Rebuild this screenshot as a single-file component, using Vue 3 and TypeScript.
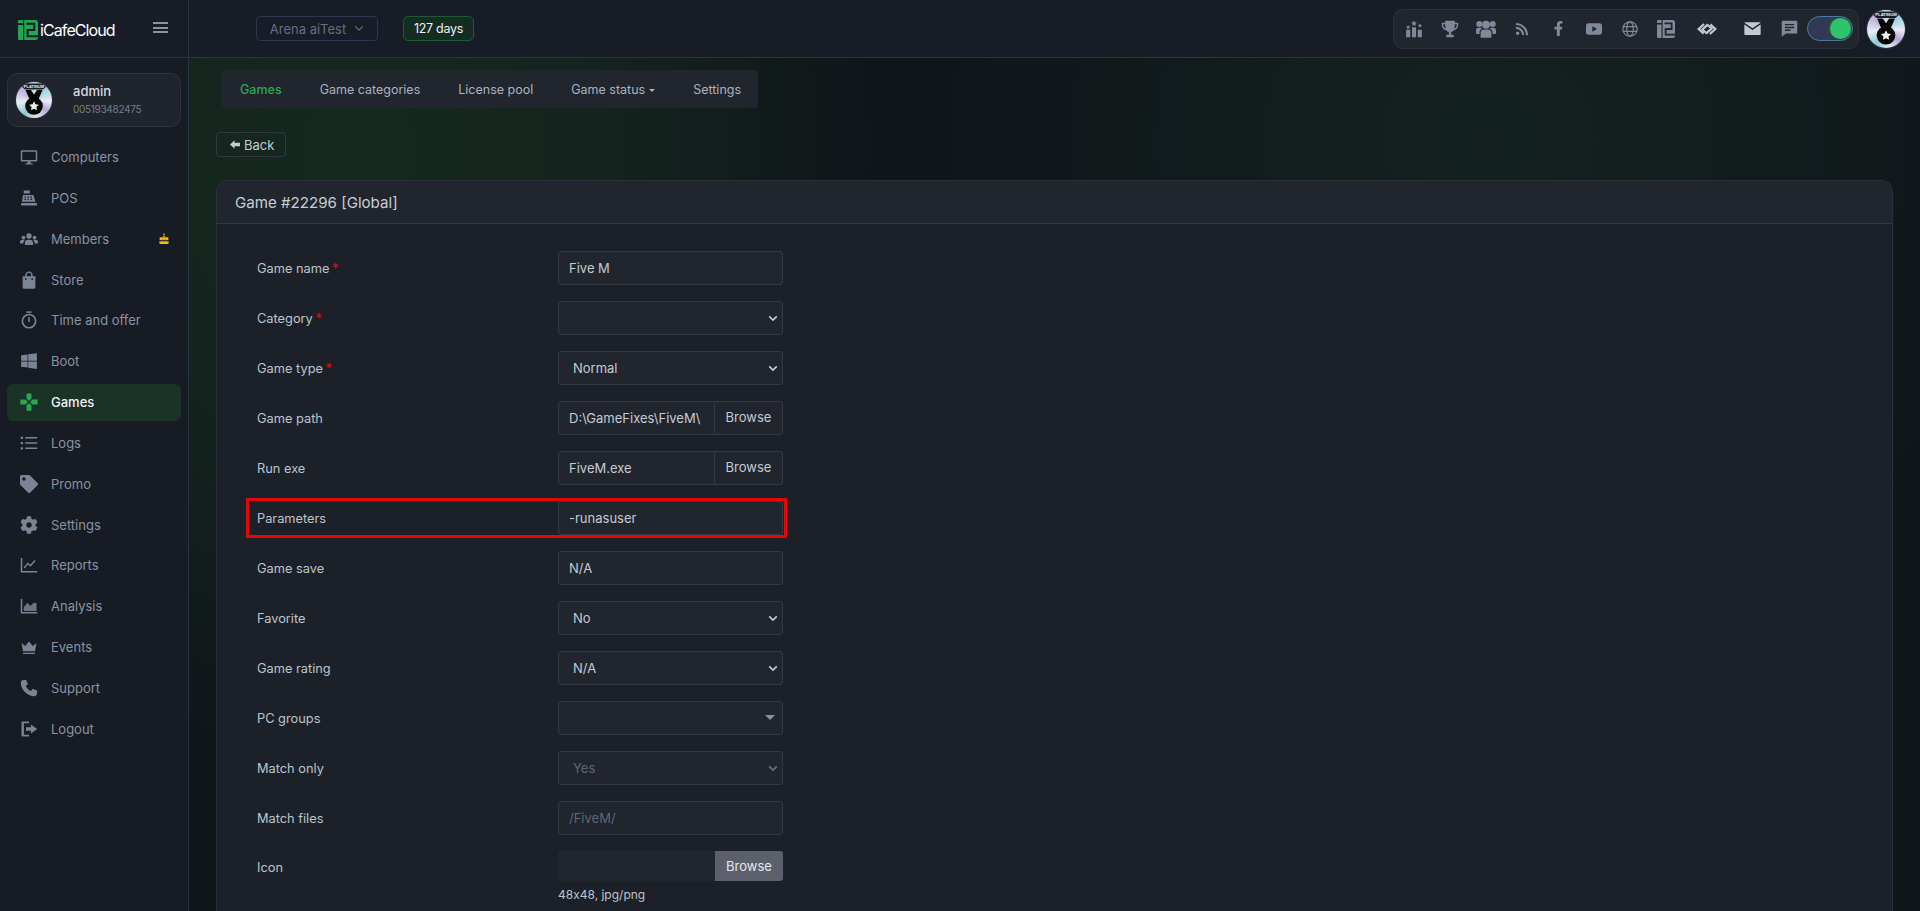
<script setup lang="ts">
interface NavItem { label: string; icon: string; active?: boolean; badge?: boolean }
interface ToolItem { icon: string; w: number; size: number; light?: boolean }
interface FormRow {
  label: string;
  type: 'text' | 'select' | 'browse' | 'multi' | 'file';
  value?: string;
  required?: boolean;
  disabled?: boolean;
  placeholder?: string;
  marked?: boolean;
}

const navItems: NavItem[] = [
  { label: 'Computers', icon: 'desktop' },
  { label: 'POS', icon: 'register' },
  { label: 'Members', icon: 'users', badge: true },
  { label: 'Store', icon: 'bag' },
  { label: 'Time and offer', icon: 'stopwatch' },
  { label: 'Boot', icon: 'windows' },
  { label: 'Games', icon: 'gamepad', active: true },
  { label: 'Logs', icon: 'list' },
  { label: 'Promo', icon: 'tag' },
  { label: 'Settings', icon: 'cog' },
  { label: 'Reports', icon: 'line' },
  { label: 'Analysis', icon: 'area' },
  { label: 'Events', icon: 'crown' },
  { label: 'Support', icon: 'phone' },
  { label: 'Logout', icon: 'logout' }
];

const tools: ToolItem[] = [
  { icon: 'podium', w: 36, size: 18 },
  { icon: 'trophy', w: 36, size: 18 },
  { icon: 'group', w: 36, size: 20 },
  { icon: 'rss', w: 36, size: 14 },
  { icon: 'facebook', w: 36, size: 15 },
  { icon: 'youtube', w: 36, size: 16 },
  { icon: 'globe', w: 36, size: 16 },
  { icon: 'logo', w: 36, size: 18 },
  { icon: 'wings', w: 46, size: 20, light: true },
  { icon: 'mail', w: 44, size: 17, light: true },
  { icon: 'chat', w: 30, size: 17 }
];

const tabs = ['Game categories', 'License pool'];

const rows: FormRow[] = [
  { label: 'Game name', type: 'text', value: 'Five M', required: true },
  { label: 'Category', type: 'select', value: '', required: true },
  { label: 'Game type', type: 'select', value: 'Normal', required: true },
  { label: 'Game path', type: 'browse', value: 'D:\\GameFixes\\FiveM\\' },
  { label: 'Run exe', type: 'browse', value: 'FiveM.exe' },
  { label: 'Parameters', type: 'text', value: '-runasuser', marked: true },
  { label: 'Game save', type: 'text', value: 'N/A' },
  { label: 'Favorite', type: 'select', value: 'No' },
  { label: 'Game rating', type: 'select', value: 'N/A' },
  { label: 'PC groups', type: 'multi' },
  { label: 'Match only', type: 'select', value: 'Yes', disabled: true },
  { label: 'Match files', type: 'text', placeholder: '/FiveM/' },
  { label: 'Icon', type: 'file' }
];
</script>

<template>
  <div class="app">
    <!-- Icon sprite -->
    <svg class="sprite" aria-hidden="true">
      <symbol id="i-desktop" viewBox="0 0 24 24">
        <path fill-rule="evenodd" d="M2.5 3h19A1.5 1.5 0 0 1 23 4.500v12a1.500 1.500 0 0 1-1.500 1.500h-19A1.500 1.500 0 0 1 1 16.500v-12A1.500 1.500 0 0 1 2.500 3zM3 5v11h18V5z" />
        <path d="M10 18h4l.6 2.500H17V22H7v-1.500h2.400z" />
      </symbol>
      <symbol id="i-register" viewBox="0 0 24 24">
        <path d="M5 2h8v4H5zM4 8h14l2.500 9H2.500zM1.500 18.500h21V22h-21z" />
        <path fill="#171b24" d="M6 10h2v1.500H6zM10 10h2v1.500h-2zM14 10h2v1.500h-2zM6 13h2v1.500H6zM10 13h2v1.500h-2zM14 13h2v1.500h-2z" />
      </symbol>
      <symbol id="i-users" viewBox="0 0 24 20">
        <circle cx="12" cy="6" r="3.600" />
        <circle cx="4.600" cy="8" r="2.500" />
        <circle cx="19.400" cy="8" r="2.500" />
        <path d="M6.500 18v-2.500C6.500 12.500 8.500 11 10.500 11h3c2 0 4 1.500 4 4.500V18zM0 16v-2c0-2 1.300-3 3-3h2.200c.6 0 1 .2 1.300.4-1.300 1-2 2.500-2.100 4.600zM24 16v-2c0-2-1.300-3-3-3h-2.200c-.6 0-1 .2-1.300.4 1.300 1 2 2.500 2.100 4.600z" />
      </symbol>
      <symbol id="i-group" viewBox="0 0 24 22">
        <circle cx="12" cy="6" r="4.800" />
        <circle cx="3.900" cy="5" r="3.600" />
        <circle cx="20.100" cy="5" r="3.600" />
        <path d="M5.500 21.500v-6c0-2.600 2-4 4-4h5c2 0 4 1.400 4 4v6zM0 16v-3.500c0-2 1.300-3 3-3h2.800c.8 0 1.300.3 1.700.8-2 .9-3.200 2.600-3.200 4.700V17H1a1 1 0 0 1-1-1zM24 16v-3.500c0-2-1.300-3-3-3h-2.800c-.8 0-1.300.3-1.700.8 2 .9 3.200 2.600 3.200 4.700V17h3.300a1 1 0 0 0 1-1z" />
      </symbol>
      <symbol id="i-bag" viewBox="0 0 24 24">
        <path fill-rule="evenodd" d="M12 0.500c2.800 0 4.800 2 4.800 4.700V7h3.700v14.500c0 1.100-.9 2-2 2h-13c-1.100 0-2-.9-2-2V7h3.700V5.200c0-2.700 2-4.700 4.800-4.700zM9.200 7h5.600V5.200c0-1.700-1.100-2.800-2.800-2.800S9.200 3.500 9.200 5.200z" />
        <path fill="#171b24" d="M7.800 9.500a1.200 1.200 0 1 0 0 2.400 1.200 1.200 0 0 0 0-2.400zM16.200 9.500a1.200 1.200 0 1 0 0 2.400 1.200 1.200 0 0 0 0-2.400z" />
      </symbol>
      <symbol id="i-stopwatch" viewBox="0 0 24 24">
        <path d="M8.500 0.500h7v2h-7z" />
        <circle cx="12" cy="13.500" r="8.800" fill="none" stroke="currentColor" stroke-width="2.200" />
        <path d="M11 8h2v6.500h-2z" />
      </symbol>
      <symbol id="i-windows" viewBox="0 0 448 512">
        <path d="M0 93.700l183.600-25.300v177.400H0V93.700zm0 324.600l183.600 25.300V268.400H0v149.900zm202.200 28L448 480V268.400H202.200v177.900zm0-380.600v180.100H448V32L202.200 65.700z" />
      </symbol>
      <symbol id="i-gamepad" viewBox="0 0 24 24">
        <path d="M8.700 0.500h6.600v6.800L12 10.600 8.700 7.300zM8.700 23.500h6.600v-6.800L12 13.400 8.700 16.700zM0.500 8.700h6.800L10.600 12l-3.300 3.300H0.500zM23.500 8.700h-6.800L13.400 12l3.300 3.300h6.800z" />
      </symbol>
      <symbol id="i-list" viewBox="0 0 24 24">
        <path d="M1 3.500h3v3H1zM1 10.500h3v3H1zM1 17.500h3v3H1zM7 4h16v2H7zM7 11h16v2H7zM7 18h16v2H7z" />
      </symbol>
      <symbol id="i-tag" viewBox="0 0 512 512">
        <path d="M0 252.118V48C0 21.490 21.490 0 48 0h204.118a48 48 0 0 1 33.941 14.059l211.882 211.882c18.745 18.745 18.745 49.137 0 67.882L293.823 497.941c-18.745 18.745-49.137 18.745-67.882 0L14.059 286.059A48 48 0 0 1 0 252.118zM112 64c-26.510 0-48 21.490-48 48s21.490 48 48 48 48-21.490 48-48-21.490-48-48-48z" />
      </symbol>
      <symbol id="i-cog" viewBox="0 0 512 512">
        <path d="M487.400 315.700l-42.600-24.600c4.300-23.200 4.300-47 0-70.200l42.600-24.600c4.900-2.800 7.100-8.600 5.500-14-11.100-35.600-30-67.800-54.700-94.600-3.800-4.100-10-5.100-14.800-2.300L380.800 110c-17.900-15.400-38.500-27.300-60.800-35.100V25.800c0-5.600-3.900-10.500-9.400-11.700-36.700-8.200-74.300-7.800-109.200 0-5.500 1.200-9.400 6.100-9.400 11.700V75c-22.200 7.900-42.800 19.800-60.800 35.100L88.700 85.500c-4.900-2.800-11-1.900-14.800 2.300-24.700 26.700-43.600 58.900-54.700 94.600-1.700 5.400.6 11.200 5.500 14L67.300 221c-4.300 23.200-4.300 47 0 70.200l-42.600 24.600c-4.900 2.800-7.100 8.600-5.500 14 11.100 35.600 30 67.800 54.700 94.600 3.800 4.100 10 5.100 14.800 2.300l42.600-24.600c17.900 15.400 38.500 27.300 60.800 35.100v49.200c0 5.600 3.900 10.500 9.400 11.700 36.700 8.200 74.300 7.800 109.200 0 5.500-1.200 9.400-6.100 9.400-11.700v-49.200c22.200-7.900 42.800-19.800 60.800-35.100l42.600 24.600c4.900 2.800 11 1.900 14.800-2.300 24.700-26.700 43.600-58.900 54.700-94.600 1.500-5.500-.7-11.300-5.600-14.100zM256 336c-44.100 0-80-35.900-80-80s35.900-80 80-80 80 35.900 80 80-35.900 80-80 80z" />
      </symbol>
      <symbol id="i-line" viewBox="0 0 24 24">
        <path d="M1 2.500h2V20h20v2H1z" />
        <path d="M5.500 16l5-6 3.500 3 6-7" fill="none" stroke="currentColor" stroke-width="1.800" />
      </symbol>
      <symbol id="i-area" viewBox="0 0 24 24">
        <path d="M1 2.500h2V20h20v2H1z" />
        <path d="M5 18.500v-5l4.500-6 4.500 4 4-4 4 0.500v10.500z" opacity="0.85" />
        <path d="M4.500 13.500l5-6.500 4.500 4 5-5.500 3.500 1" fill="none" stroke="#171b24" stroke-width="1" />
      </symbol>
      <symbol id="i-crown" viewBox="0 0 24 24">
        <path d="M2 6.500l5 4 5-6 5 6 5-4-2 11H4zM4 19.500h16v1.800H4z" />
      </symbol>
      <symbol id="i-phone" viewBox="0 0 24 24">
        <path d="M3.500 1.500L8 1l2.500 6-2.800 2.300c1.300 2.900 3.700 5.300 6.800 6.800L17 13l6 2.500-.5 4.500c-.2 1.600-1.500 3-3.500 3C10 23 1 14 1 5c0-2 1-3.300 2.500-3.500z" />
      </symbol>
      <symbol id="i-logout" viewBox="0 0 24 24">
        <path d="M3.500 2H12v2.200H5.200v15.600H12V22H3.500A1.500 1.500 0 0 1 2 20.500v-17A1.500 1.500 0 0 1 3.500 2z" />
        <path d="M14.500 6l8.500 6-8.500 6v-3.800H8v-4.400h6.500z" />
      </symbol>
      <symbol id="i-podium" viewBox="0 0 24 24">
        <path d="M1.500 13h5.500v10H1.500zM9.300 9.500h5.400V23H9.300zM17 13h5.500v10H17z" />
        <path d="M12 0.500l1.200 2.500 2.700.4-2 1.900.5 2.700-2.400-1.300-2.400 1.300.5-2.700-2-1.900 2.700-.4zM4.200 6.500l.9 1.800 2 .3-1.500 1.400.4 2-1.800-1-1.800 1 .4-2-1.500-1.400 2-.3zM19.800 4.500l.9 1.800 2 .3-1.500 1.400.4 2-1.800-1-1.800 1 .4-2-1.500-1.400 2-.3z" />
      </symbol>
      <symbol id="i-trophy" viewBox="0 0 24 24">
        <path fill-rule="evenodd" d="M5.500 1h13v2.500H23v3c0 4-2.800 6.500-6 7-.8 1.300-2 2.200-3.500 2.500v3.500H17V23H7v-3.500h3.500V16c-1.500-.3-2.700-1.200-3.500-2.500-3.200-.5-6-3-6-7v-3h4.500zM3 5.500v1c0 2.400 1.500 4 3.400 4.700-.5-1.600-.8-3.600-.9-5.700zM21 5.500h-2.500c-.1 2.100-.4 4.100-.9 5.700 1.900-.7 3.400-2.300 3.400-4.700z" />
      </symbol>
      <symbol id="i-rss" viewBox="0 0 448 512">
        <path d="M128.081 415.959c0 35.369-28.672 64.041-64.041 64.041S0 451.328 0 415.959s28.672-64.041 64.041-64.041 64.040 28.673 64.040 64.041zm175.660 47.250c-8.354-154.600-132.185-278.587-286.950-286.950C7.656 175.765 0 183.105 0 192.253v48.069c0 8.415 6.490 15.472 14.887 16.018 111.832 7.284 201.473 96.702 208.772 208.772.547 8.397 7.604 14.887 16.018 14.887h48.069c9.149.001 16.489-7.655 15.995-16.790zm144.249.288C439.596 229.677 251.465 40.445 16.503 32.010 7.473 31.686 0 38.981 0 48.016v48.068c0 8.625 6.835 15.645 15.453 15.999 191.179 7.839 344.627 161.316 352.465 352.465.353 8.618 7.373 15.453 15.999 15.453h48.068c9.034-.001 16.329-7.474 16.005-16.504z" />
      </symbol>
      <symbol id="i-facebook" viewBox="0 0 320 512">
        <path d="M279.140 288l14.220-92.660h-88.910v-60.130c0-25.350 12.420-50.060 52.240-50.060h40.420V6.260S260.430 0 225.360 0c-73.220 0-121.080 44.380-121.080 124.720v70.620H22.890V288h81.390v224h100.170V288z" />
      </symbol>
      <symbol id="i-youtube" viewBox="0 0 24 24">
        <path fill-rule="evenodd" d="M4 3.500h16a4 4 0 0 1 4 4v9a4 4 0 0 1-4 4H4a4 4 0 0 1-4-4v-9a4 4 0 0 1 4-4zM9.500 8v8l7-4z" />
      </symbol>
      <symbol id="i-globe" viewBox="0 0 24 24">
        <g fill="none" stroke="currentColor" stroke-width="1.800">
          <circle cx="12" cy="12" r="10.800" />
          <ellipse cx="12" cy="12" rx="5" ry="10.800" />
          <path d="M1.500 8.500h21M1.500 15.500h21" />
        </g>
      </symbol>
      <!-- i2 mark, the cut colour comes from --cut on the element using it -->
      <symbol id="i-logo" viewBox="0 0 24 24">
        <path d="M1.500 0h4.500v4H0V1.500A1.500 1.500 0 0 1 1.500 0zM0 6h6v18H1.500A1.500 1.500 0 0 1 0 22.500zM7.500 0H21a3 3 0 0 1 3 3v18a3 3 0 0 1-3 3H7.500z" />
        <path d="M10 4.500h9.500v7.500H11.500v7.500H24" fill="none" stroke="var(--cut)" stroke-width="2.400" />
      </symbol>
      <symbol id="i-wings" viewBox="0 0 24 24">
        <g fill="none" stroke="currentColor" stroke-width="2.600">
          <path d="M8.500 6L2 12l6 5.500" />
          <path d="M15.500 18L22 12l-6-5.500" />
          <path d="M6.500 12.500L12.500 7l6 5" />
          <path d="M5.500 12L11.500 17l6-5.500" />
        </g>
      </symbol>
      <symbol id="i-mail" viewBox="0 0 24 20">
        <path d="M1.500 1h21c.5 0 1 .3 1 .8L12 9.500.5 1.800c0-.5.5-.8 1-.8z" />
        <path d="M.5 4.200L12 12l11.500-7.800V18c0 .6-.5 1-1 1h-21c-.5 0-1-.4-1-1z" />
      </symbol>
      <symbol id="i-chat" viewBox="0 0 24 24">
        <path fill-rule="evenodd" d="M2.500 1h19A1.500 1.500 0 0 1 23 2.500v15a1.500 1.500 0 0 1-1.500 1.500H7l-6 4.500v-21A1.500 1.500 0 0 1 2.500 1zM5.500 5.500v2h13v-2zM5.500 9.500v2h13v-2zM5.500 13.500v2h8v-2z" />
      </symbol>
      <symbol id="i-cake" viewBox="0 0 24 24">
        <path d="M11 1h2l.5 3h-3zM10.500 5h3v3h-3zM5 8.500h14a2 2 0 0 1 2 2V13l-3 2-3-2-3 2-3-2-3 2-3-2v-2.500a2 2 0 0 1 2-2zM3 15.500l3 2 3-2 3 2 3-2 3 2 3-2V22H3z" />
      </symbol>
      <symbol id="i-medal" viewBox="0 0 36 36">
        <path d="M9 1.500h18l3 3.500-3 2.500H9L6 5z" fill="#1b1d22" />
        <path d="M9.500 8h5.500l3 4.500L21 8h5.500l-4.500 10.500h-8z" fill="#050505" />
        <circle cx="18" cy="24" r="8.800" fill="#050505" />
        <path d="M18 19.200l1.500 3 3.300.5-2.400 2.300.6 3.300-3-1.600-3 1.600.6-3.300-2.400-2.300 3.300-.5z" fill="#eeeeee" />
      </symbol>
    </svg>

    <!-- Top bar -->
    <header class="topbar">
      <div class="brand">
        <svg class="brand-mark"><use href="#i-logo" /></svg>
        <span class="brand-name">iCafeCloud</span>
        <span class="burger"><i></i><i></i><i></i></span>
      </div>
      <button class="center-select">
        Arena aiTest
        <svg viewBox="0 0 12 8" width="10" height="7"><path d="M1.500 1.500L6 6l4.500-4.500" fill="none" stroke="currentColor" stroke-width="1.400" /></svg>
      </button>
      <span class="days">127 days</span>

      <div class="tools">
        <span v-for="tool in tools" :key="tool.icon" class="tool" :class="{ light: tool.light }" :style="{ width: tool.w + 'px' }">
          <svg :width="tool.size" :height="tool.size"><use :href="'#i-' + tool.icon" /></svg>
        </span>
        <span class="toggle"><i></i></span>
      </div>
      <span class="avatar avatar-top">
        <svg width="38" height="38" viewBox="0 0 36 36">
          <use href="#i-medal" />
          <text x="18" y="5.800" text-anchor="middle" font-size="4" font-weight="700" fill="#eef0f2">PLATINUM</text>
        </svg>
      </span>
    </header>

    <div class="body">
      <!-- Sidebar -->
      <aside class="sidebar">
        <div class="user-card">
          <span class="avatar">
            <svg width="36" height="36" viewBox="0 0 36 36">
              <use href="#i-medal" />
              <text x="18" y="5.800" text-anchor="middle" font-size="4" font-weight="700" fill="#eef0f2">PLATINUM</text>
            </svg>
          </span>
          <div class="user-text">
            <div class="user-name">admin</div>
            <div class="user-id">005193482475</div>
          </div>
        </div>
        <nav class="nav">
          <a v-for="item in navItems" :key="item.label" class="nav-item" :class="{ active: item.active }">
            <svg class="nav-icon" width="18" height="18"><use :href="'#i-' + item.icon" /></svg>
            <span>{{ item.label }}</span>
            <svg v-if="item.badge" class="cake" width="12" height="12"><use href="#i-cake" /></svg>
          </a>
        </nav>
      </aside>

      <!-- Content -->
      <main class="main">
        <div class="tabs">
          <a class="tab current">Games</a>
          <a v-for="tab in tabs" :key="tab" class="tab">{{ tab }}</a>
          <a class="tab">Game status<i class="caret"></i></a>
          <a class="tab">Settings</a>
        </div>

        <button class="back">
          <svg viewBox="0 0 12 10" width="10" height="9"><path d="M5.500 0v3H12v4H5.500v3L0 5z" /></svg>
          Back
        </button>

        <section class="card">
          <div class="card-header">Game #22296 [Global]</div>
          <div class="card-body">
            <div v-for="row in rows" :key="row.label" class="row" :class="{ 'file-row': row.type === 'file' }">
              <label class="row-label">
                {{ row.label }}
                <span v-if="row.required" class="req">*</span>
              </label>

              <div class="row-field">
                <input v-if="row.type === 'text'" class="control" type="text" readonly :value="row.value" :placeholder="row.placeholder" />

                <select v-else-if="row.type === 'select'" class="control select" :class="{ off: row.disabled }" :disabled="row.disabled" :value="row.value">
                  <option :value="row.value">{{ row.value }}</option>
                </select>

                <div v-else-if="row.type === 'browse'" class="group">
                  <input class="control" type="text" readonly :value="row.value" />
                  <span class="addon">Browse</span>
                </div>

                <div v-else-if="row.type === 'multi'" class="control multi"><i class="multi-caret"></i></div>

                <template v-else>
                  <div class="file">
                    <span class="file-btn">Browse</span>
                  </div>
                  <div class="help">48x48, jpg/png</div>
                </template>
              </div>

              <div v-if="row.marked" class="mark"></div>
            </div>
          </div>
        </section>
      </main>
    </div>
  </div>
</template>

<style>
html, body {
  margin: 0;
  background: #171b24;
}
</style>

<style scoped>
.app {
  height: 100vh;
  display: flex;
  flex-direction: column;
  overflow: hidden;
  font-family: Inter, "Open Sans", sans-serif;
  font-size: 13px;
  color: #c5cbd3;
}

.sprite {
  position: absolute;
  width: 0;
  height: 0;
}

/* Top bar */
.topbar {
  height: 57px;
  flex: none;
  display: flex;
  align-items: center;
  background: #181c26;
  border-bottom: 1px solid #2d3241;
}

.brand {
  width: 189px;
  height: 57px;
  box-sizing: border-box;
  flex: none;
  display: flex;
  align-items: center;
  padding-left: 18px;
  border-right: 1px solid #2d3241;
  margin-right: 67px;
}

.brand-mark {
  width: 20px;
  height: 20px;
  color: #22a650;
  fill: currentColor;
  --cut: #181c26;
  margin-top: 2px;
  flex: none;
}

.brand-name {
  margin-left: 2px;
  margin-top: 2px;
  color: #fff;
  font-size: 16px;
  letter-spacing: -0.9px;
  width: 92px;
  flex: none;
}

.burger {
  display: flex;
  flex-direction: column;
  gap: 2.500px;
  width: 15px;
  margin-top: -2px;
  margin-left: 21px;
}

.burger i {
  height: 2px;
  background: #8b92a0;
}

.center-select {
  width: 122px;
  height: 25px;
  box-sizing: border-box;
  display: flex;
  align-items: center;
  justify-content: center;
  gap: 8px;
  background: transparent;
  border: 1px solid #2f3450;
  border-radius: 4px;
  color: #666d85;
  font: inherit;
  padding: 0;
}

.days {
  width: 71px;
  height: 25px;
  box-sizing: border-box;
  margin-left: 25px;
  display: flex;
  align-items: center;
  justify-content: center;
  background: #152c23;
  border: 1px solid #1f5a37;
  border-radius: 5px;
  color: #eef2f0;
  font-size: 12.500px;
  letter-spacing: -0.3px;
}

.tools {
  margin-left: auto;
  width: 466px;
  height: 40px;
  box-sizing: border-box;
  display: flex;
  align-items: center;
  padding-left: 2px;
  background: #21252e;
  border: 1px solid #2d323c;
  border-radius: 10px;
}

.tool {
  height: 100%;
  flex: none;
  display: flex;
  align-items: center;
  justify-content: center;
  color: #7f8998;
  fill: currentColor;
  --cut: #21252e;
}

.tool.light {
  color: #c3c9d1;
}

.toggle {
  width: 46px;
  height: 25px;
  box-sizing: border-box;
  margin-left: 3px;
  display: flex;
  align-items: center;
  justify-content: flex-end;
  background: #333856;
  border: 1px solid #4d7a9c;
  border-radius: 13px;
}

.toggle i {
  width: 21px;
  height: 21px;
  border-radius: 50%;
  background: #2fc46c;
  box-shadow: -2px 0 2px #1c5a3c;
  margin-right: 1px;
}

.avatar {
  width: 36px;
  height: 36px;
  flex: none;
  display: block;
  border-radius: 50%;
  overflow: hidden;
  font-family: "Liberation Sans", sans-serif;
  box-shadow: 0 0 0 1px #2c303a;
  background: conic-gradient(#cfdde4, #9fd5e2 50deg, #eceaf4 95deg, #b7a8d6 130deg, #dfe6ec 170deg, #8cc9d8 215deg, #e6eef3 260deg, #c0b2dd 310deg, #cfdde4);
}

.avatar-top {
  width: 38px;
  height: 38px;
  margin: 0 15px 0 8px;
}

/* Layout */
.body {
  flex: 1;
  display: flex;
  min-height: 0;
}

.sidebar {
  width: 188px;
  flex: none;
  border-right: 1px solid #2d3241;
  background: #171b24;
}

.user-card {
  margin: 15px 7px 0;
  height: 54px;
  box-sizing: border-box;
  display: flex;
  align-items: center;
  padding-left: 8px;
  background: #20242d;
  border: 1px solid #2e333e;
  border-radius: 10px;
}

.user-text {
  margin-left: 21px;
  margin-top: -3px;
}

.user-name {
  color: #d5dae2;
  font-weight: 500;
  font-size: 13px;
  margin-bottom: 4px;
}

.user-id {
  color: #767e8c;
  font-size: 10px;
  letter-spacing: -0.3px;
}

.nav {
  margin: 11.500px 7px 0;
  display: flex;
  flex-direction: column;
  gap: 3.850px;
}

.nav-item {
  height: 37px;
  display: flex;
  align-items: center;
  padding-left: 13px;
  border-radius: 6px;
  color: #8a93a3;
  font-size: 13px;
}

.nav-icon {
  fill: currentColor;
  margin-right: 13px;
  color: #7b8494;
  flex: none;
}

.nav-item.active {
  background: #1b3327;
  color: #eef2f5;
  font-weight: 500;
}

.nav-item.active .nav-icon {
  color: #2aa84f;
}

.cake {
  margin-left: auto;
  margin-right: 11px;
  fill: #f5b916;
}

/* Content */
.main {
  flex: 1;
  min-width: 0;
  overflow: hidden;
  padding: 12px 27px 0;
  background:
    radial-gradient(ellipse 520px 620px at 170px 90px, #15291f 0%, rgba(21, 41, 31, 0.75) 45%, rgba(21, 41, 31, 0) 100%),
    radial-gradient(ellipse 560px 520px at 1300px 80px, #14221f 0%, rgba(20, 34, 31, 0) 100%),
    #10151a;
}

.tabs {
  display: inline-flex;
  height: 38px;
  margin-left: 5px;
  background: #21252e;
  border-radius: 4px;
  align-items: center;
  vertical-align: top;
}

.tab {
  padding: 0 19px;
  color: #aab2bf;
  white-space: nowrap;
  font-size: 12.500px;
}

.tab:last-child {
  padding-right: 17px;
}

.tab.current {
  color: #27a84d;
  font-weight: 500;
}

.caret {
  display: inline-block;
  margin-left: 4px;
  vertical-align: 2px;
  border: 3.500px solid transparent;
  border-top-color: #aab2bf;
  border-bottom: 0;
}

.back {
  display: flex;
  align-items: center;
  gap: 4px;
  height: 25px;
  width: 70px;
  box-sizing: border-box;
  margin-top: 24px;
  padding: 0 0 0 13px;
  background: transparent;
  border: 1px solid #323843;
  border-radius: 4px;
  color: #c5cbd3;
  fill: #c5cbd3;
  font: inherit;
}

.card {
  margin-top: 23px;
  background: #1c2129;
  border: 1px solid #2b303a;
  border-bottom: 0;
  border-radius: 12px 12px 0 0;
}

.card-header {
  height: 42px;
  display: flex;
  align-items: center;
  padding-left: 18px;
  background: #21252e;
  border-bottom: 1px solid #333844;
  border-radius: 12px 12px 0 0;
  color: #c8ced6;
  font-size: 15.100px;
}

.card-body {
  padding: 27px 0 200px 40px;
  display: flex;
  flex-direction: column;
  gap: 16px;
}

.row {
  position: relative;
  display: flex;
  align-items: center;
  width: 526px;
  min-height: 34px;
}

.row.file-row {
  align-items: flex-start;
}

.row-label {
  width: 301px;
  flex: none;
  color: #bdc4cd;
  font-size: 12.800px;
}

.file-row .row-label {
  line-height: 34px;
}

.req {
  color: #e00d0d;
  margin-left: -1px;
}

.row-field {
  width: 225px;
  flex: none;
}

.control {
  display: block;
  width: 100%;
  height: 34px;
  box-sizing: border-box;
  padding: 0 10px;
  background: #21252e;
  border: 1px solid #333843;
  border-radius: 3px;
  color: #c5cbd3;
  font-family: inherit;
  font-size: 13px;
  outline: none;
}

.control::placeholder {
  color: #5e6673;
  font-style: normal;
}

.select {
  appearance: none;
  padding-left: 14px;
  background-image: url("data:image/svg+xml,%3Csvg xmlns='http://www.w3.org/2000/svg' viewBox='0 0 12 8'%3E%3Cpath d='M1.500 1.500L6 6l4.500-4.500' fill='none' stroke='%23c5cbd3' stroke-width='2'/%3E%3C/svg%3E");
  background-repeat: no-repeat;
  background-position: right 4px center;
  background-size: 10px 7px;
}

.select.off {
  color: #5f6672;
  opacity: 1;
  background-image: url("data:image/svg+xml,%3Csvg xmlns='http://www.w3.org/2000/svg' viewBox='0 0 12 8'%3E%3Cpath d='M1.500 1.500L6 6l4.500-4.500' fill='none' stroke='%236a7280' stroke-width='2'/%3E%3C/svg%3E");
}

.group {
  display: flex;
}

.group .control {
  flex: 1;
  min-width: 0;
  border-radius: 3px 0 0 3px;
}

.addon {
  width: 68px;
  height: 34px;
  box-sizing: border-box;
  flex: none;
  display: flex;
  align-items: center;
  justify-content: center;
  border: 1px solid #333843;
  border-left: 0;
  border-radius: 0 3px 3px 0;
  background: #21252e;
  color: #c5cbd3;
  padding-bottom: 3px;
}

.multi {
  position: relative;
}

.multi-caret {
  position: absolute;
  right: 7px;
  top: 13px;
  border: 5px solid transparent;
  border-top: 5px solid #8b919c;
  border-bottom: 0;
}

.file {
  height: 30px;
  display: flex;
  justify-content: flex-end;
  background: #21252e;
  border-radius: 3px;
}

.file-btn {
  width: 68px;
  display: flex;
  align-items: center;
  justify-content: center;
  background: #5c606d;
  border-radius: 0 3px 3px 0;
  color: #e6e8ec;
}

.help {
  margin-top: 6px;
  color: #bdc4cd;
  font-size: 12px;
  font-variant-ligatures: none;
  font-feature-settings: "calt" 0;
}

/* Red highlight drawn over the Parameters row */
.mark {
  position: absolute;
  left: -11px;
  right: -4px;
  top: -3px;
  bottom: -3px;
  border: 3px solid #e30808;
  pointer-events: none;
}
</style>
